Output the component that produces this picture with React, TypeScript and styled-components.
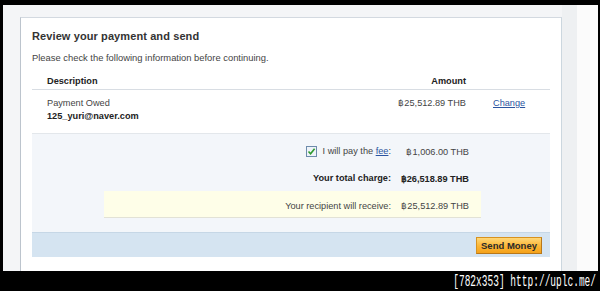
import React from "react";
import styled, { createGlobalStyle } from "styled-components";

const GlobalStyle = createGlobalStyle`
  html, body {
    margin: 0;
    padding: 0;
    background: #000;
  }
  body {
    font-family: "Liberation Sans", Arial, sans-serif;
    color: #333;
  }
`;

const Frame = styled.div`
  width: 600px;
  height: 291px;
  display: flex;
  flex-direction: column;
  background: #000;
  overflow: hidden;
`;

const Shot = styled.div`
  height: 266px;
  margin: 5px 2px 0 3px;
  display: flex;
  background: #f4f5f7;
`;

const Gutter = styled.div`
  width: 17px;
  flex: none;
`;

const Scroll = styled.div`
  width: 15px;
  flex: none;
  background: #eef0f2;
`;

const Edge = styled.div`
  width: 21px;
  flex: none;
  background: #fbfbfb;
`;

const Panel = styled.div`
  flex: none;
  width: 518px;
  margin-top: 12px;
  padding: 11px 11px 0 11px;
  background: #fff;
  border-top: 1px solid #d3d9e0;
  border-left: 1px solid #bcc4cd;
  border-right: 1px solid #ccd7df;
`;

const Title = styled.h2`
  margin: 0;
  font-size: 11px;
  line-height: 14px;
  font-weight: bold;
  color: #333;
  letter-spacing: 0.1px;
`;

const Intro = styled.p`
  margin: 9px 0 0;
  font-size: 9.4px;
  line-height: 12px;
  color: #444;
`;

const Table = styled.div`
  margin-top: 11px;
`;

const Row = styled.div<{ $head?: boolean }>`
  display: grid;
  grid-template-columns: 1fr 120px 84px;
  border-bottom: 1px solid ${(p) => (p.$head ? "#d8dde3" : "#e3e7eb")};
  padding: ${(p) => (p.$head ? "0 0 2px" : "7px 0 10px")};
  font-size: 9.2px;
  line-height: ${(p) => (p.$head ? "12px" : "13px")};
`;

const Cell = styled.div<{ $right?: boolean; $bold?: boolean }>`
  padding-left: ${(p) => (p.$right ? "0" : "15px")};
  text-align: ${(p) => (p.$right ? "right" : "left")};
  font-weight: ${(p) => (p.$bold ? "bold" : "normal")};
  color: ${(p) => (p.$bold ? "#222" : "#444")};
`;

const Strong = styled.div`
  font-weight: bold;
  color: #222;
`;

const Action = styled.div`
  padding-left: 27px;
`;

const Link = styled.a`
  color: #2b54a0;
  text-decoration: underline;
  cursor: pointer;
`;

const Summary = styled.div`
  background: #f3f6fa;
  padding: 8px 0 15px;
  display: flex;
  flex-direction: column;
  align-items: flex-end;
`;

const Line = styled.div<{ $bold?: boolean; $mt?: number }>`
  display: flex;
  align-items: center;
  justify-content: flex-end;
  height: 18px;
  margin-top: ${(p) => p.$mt ?? 0}px;
  margin-right: 81px;
  font-size: 9.2px;
  font-weight: ${(p) => (p.$bold ? "bold" : "normal")};
  color: ${(p) => (p.$bold ? "#222" : "#444")};
`;

const Label = styled.span`
  display: flex;
  align-items: center;
  gap: 6px;
`;

const Amount = styled.span`
  width: 78px;
  text-align: right;
`;

const Notice = styled.div`
  margin-top: 4px;
  margin-right: 69px;
  width: 377px;
  height: 26px;
  padding: 3px 12px 0 0;
  box-sizing: border-box;
  background: #fefee8;
  box-shadow: 0 1px 0 #e2e2d6;
  display: flex;
  align-items: center;
  justify-content: flex-end;
  font-size: 9.2px;
  color: #444;
`;

const Check = styled.span`
  width: 9px;
  height: 9px;
  border: 1px solid #6d8bab;
  background: #eef3f8;
  display: inline-flex;
  align-items: center;
  justify-content: center;
`;

const Footer = styled.div`
  height: 24px;
  border-top: 1px solid #c6d7e6;
  background: #d5e4f1;
  display: flex;
  align-items: center;
  justify-content: flex-end;
  padding-right: 8px;
`;

const SendButton = styled.button`
  height: 17px;
  width: 66px;
  padding: 0;
  border: 1px solid #d79220;
  border-right-color: #b8781a;
  border-bottom-color: #b8781a;
  background: linear-gradient(#ffd777, #fbb534 55%, #f5a21b);
  font-family: "Liberation Sans", Arial, sans-serif;
  font-size: 9.5px;
  font-weight: bold;
  color: #2a2a2a;
  cursor: pointer;
`;

const Caption = styled.div`
  height: 20px;
  display: flex;
  align-items: center;
  justify-content: flex-end;
  padding-right: 4px;
`;

const Stamp = styled.span`
  font-family: "Liberation Mono", "DejaVu Sans Mono", monospace;
  font-size: 17px;
  color: #fff;
  display: inline-block;
  transform: scaleX(0.56);
  transform-origin: right center;
  white-space: nowrap;
`;

function CheckMark() {
  return (
    <svg width="9" height="9" viewBox="0 0 9 9">
      <path d="M1.5 4.5 L3.6 6.8 L7.6 1.8" fill="none" stroke="#2e9a2e" strokeWidth="1.6" />
    </svg>
  );
}

export default function App() {
  return (
    <>
      <GlobalStyle />
      <Frame>
        <Shot>
          <Gutter />
          <Panel>
            <Title>Review your payment and send</Title>
            <Intro>Please check the following information before continuing.</Intro>
            <Table>
              <Row $head>
                <Cell $bold>Description</Cell>
                <Cell $right $bold>Amount</Cell>
                <div />
              </Row>
              <Row>
                <Cell>
                  <div>Payment Owed</div>
                  <Strong>125_yuri@naver.com</Strong>
                </Cell>
                <Cell $right>฿25,512.89 THB</Cell>
                <Action>
                  <Link>Change</Link>
                </Action>
              </Row>
            </Table>
            <Summary>
              <Line>
                <Label>
                  <Check>
                    <CheckMark />
                  </Check>
                  <span>
                    I will pay the <Link>fee</Link>:
                  </span>
                </Label>
                <Amount>฿1,006.00 THB</Amount>
              </Line>
              <Line $bold $mt={9}>
                <Label>Your total charge:</Label>
                <Amount>฿26,518.89 THB</Amount>
              </Line>
              <Notice>
                <Label>Your recipient will receive:</Label>
                <Amount>฿25,512.89 THB</Amount>
              </Notice>
            </Summary>
            <Footer>
              <SendButton>Send Money</SendButton>
            </Footer>
          </Panel>
          <Scroll />
          <Edge />
        </Shot>
        <Caption>
          <Stamp>[782x353] http://uplc.me/</Stamp>
        </Caption>
      </Frame>
    </>
  );
}
